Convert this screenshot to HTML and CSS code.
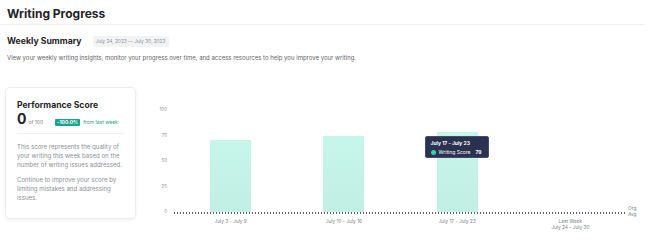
FILE: index.html
```html
<!DOCTYPE html>
<html>
<head>
<meta charset="utf-8">
<link rel="stylesheet" href="styles.css">
</head>
<body>
<header class="page-head">
  <h1 class="title">Writing Progress</h1>
</header>
<section class="summary">
  <div class="summary-head">
    <h2 class="subtitle">Weekly Summary</h2>
    <span class="date-badge">July 24, 2023 — July 30, 2023</span>
  </div>
  <p class="desc">View your weekly writing insights, monitor your progress over time, and access resources to help you improve your writing.</p>
</section>
<main class="content">
  <div class="card">
    <h3 class="card-title">Performance Score</h3>
    <div class="score-row">
      <span class="score">0</span>
      <span class="score-of">of 100</span>
      <span class="delta">-100.0%</span>
      <span class="delta-note">from last week</span>
    </div>
    <hr class="card-sep">
    <p class="card-text">This score represents the quality of your writing this week based on the number of writing issues addressed.</p>
    <p class="card-text">Continue to improve your score by limiting mistakes and addressing issues.</p>
  </div>
  <div class="chart">
    <div class="yaxis">
      <span>100</span><span>75</span><span>50</span><span>25</span><span>0</span>
    </div>
    <div class="plot-wrap">
      <div class="plot">
        <div class="col"><div class="bar" style="height:72px"></div></div>
        <div class="col"><div class="bar" style="height:76px"></div></div>
        <div class="col col-active">
          <div class="bar" style="height:80px"></div>
          <div class="tooltip">
            <div class="tt-title">July 17 - July 23</div>
            <div class="tt-row"><span class="tt-dot"></span><span class="tt-label">Writing Score</span><span class="tt-val">79</span></div>
          </div>
        </div>
        <div class="col"></div>
      </div>
      <div class="baseline"></div>
      <div class="xaxis">
        <span>July 3 - July 9</span>
        <span>July 10 - July 16</span>
        <span>July 17 - July 23</span>
        <span>Last Week<br>July 24 - July 30</span>
      </div>
      <div class="ref-label">Org<br>Avg</div>
    </div>
  </div>
</main>
</body>
</html>
```

FILE: styles.css
```css
* { box-sizing: border-box; }
html, body { margin: 0; padding: 0; background: #fff; }
body {
  font-family: Inter, "Noto Sans", sans-serif;
  color: #1f2328;
  width: 650px;
  height: 251px;
  overflow: hidden;
}
.page-head {
  padding: 5px 7px 0;
  margin-right: 6px;
  border-bottom: 1px solid #eeeff1;
  height: 25px;
}
.title {
  margin: 0;
  font-size: 12px;
  font-weight: 700;
  line-height: 17px;
}
.summary { padding: 10px 7px 0; }
.summary-head { display: flex; align-items: center; gap: 11px; height: 13px; }
.subtitle { margin: 0; font-size: 8.7px; font-weight: 700; line-height: 13px; }
.date-badge {
  font-size: 4.8px;
  color: #8a8f98;
  background: #f2f3f5;
  padding: 2px 3px;
  border-radius: 2px;
  line-height: 7px;
}
.desc {
  margin: 5px 0 0;
  font-size: 6px;
  line-height: 9px;
  color: #5f6368;
}
.content { display: flex; padding: 26px 0 0 6px; }
.card {
  width: 129px;
  height: 130px;
  border-radius: 4px;
  background: #fff;
  box-shadow: 0 0 0 1px #eceef1, 0 1px 4px rgba(0,0,0,0.10);
  padding: 11px 11px 0;
}
.card-title { margin: 0; font-size: 8.6px; font-weight: 700; line-height: 12px; }
.score-row { display: flex; align-items: baseline; margin-top: 1px; height: 14px; }
.score { font-size: 14px; font-weight: 700; line-height: 14px; }
.score-of { font-size: 5px; color: #7a7f87; margin-left: 2px; }
.delta {
  margin-left: 12px;
  font-size: 5px;
  font-weight: 700;
  color: #fff;
  background: #1aa58a;
  padding: 0.5px 2px;
  border-radius: 1px;
  line-height: 6px;
}
.delta-note { margin-left: 3px; font-size: 5px; color: #1aa58a; }
.card-sep { border: 0; border-top: 1px solid #f0f1f3; margin: 7px 0 8px; }
.card-text {
  margin: 0 0 6px;
  font-size: 6.1px;
  line-height: 9px;
  color: #8a8f96;
}
.chart { display: flex; margin-left: 24px; margin-top: 18px; }
.yaxis {
  width: 8px;
  height: 110px;
  display: flex;
  flex-direction: column;
  justify-content: space-between;
  align-items: flex-end;
  font-size: 4.5px;
  line-height: 8px;
  color: #8a8f96;
  margin-right: 7px;
}
.plot-wrap { position: relative; width: 453px; }
.plot { display: flex; height: 102px; margin-top: 4px; }
.col { flex: 1; display: flex; justify-content: center; align-items: flex-end; position: relative; }
.bar { width: 41px; background: linear-gradient(#c6f6e9, #c2efe3); }
.baseline {
  height: 1.5px;
  background: repeating-linear-gradient(90deg, #5c6068 0 1.5px, transparent 1.5px 3px);
}
.xaxis { display: flex; text-align: center; font-size: 4.8px; line-height: 6px; color: #7a7f87; margin-top: 4px; }
.xaxis span { flex: 1; }
.ref-label {
  position: absolute;
  left: 454px;
  top: 100px;
  font-size: 4.8px;
  line-height: 5.5px;
  color: #7a7f87;
}
.tooltip {
  position: absolute;
  left: 24px;
  top: 26px;
  width: 64px;
  height: 22px;
  background: #2b3150;
  border: 1px solid #474d69;
  border-radius: 2px;
  color: #fff;
  padding: 3px 5px;
  font-size: 5px;
}
.tt-title { font-weight: 700; line-height: 7px; }
.tt-row { display: flex; align-items: center; margin-top: 2px; line-height: 7px; }
.tt-dot { width: 5px; height: 5px; border-radius: 50%; background: #2fd6a5; margin-right: 3px; }
.tt-val { font-weight: 700; margin-left: 5px; }
```
